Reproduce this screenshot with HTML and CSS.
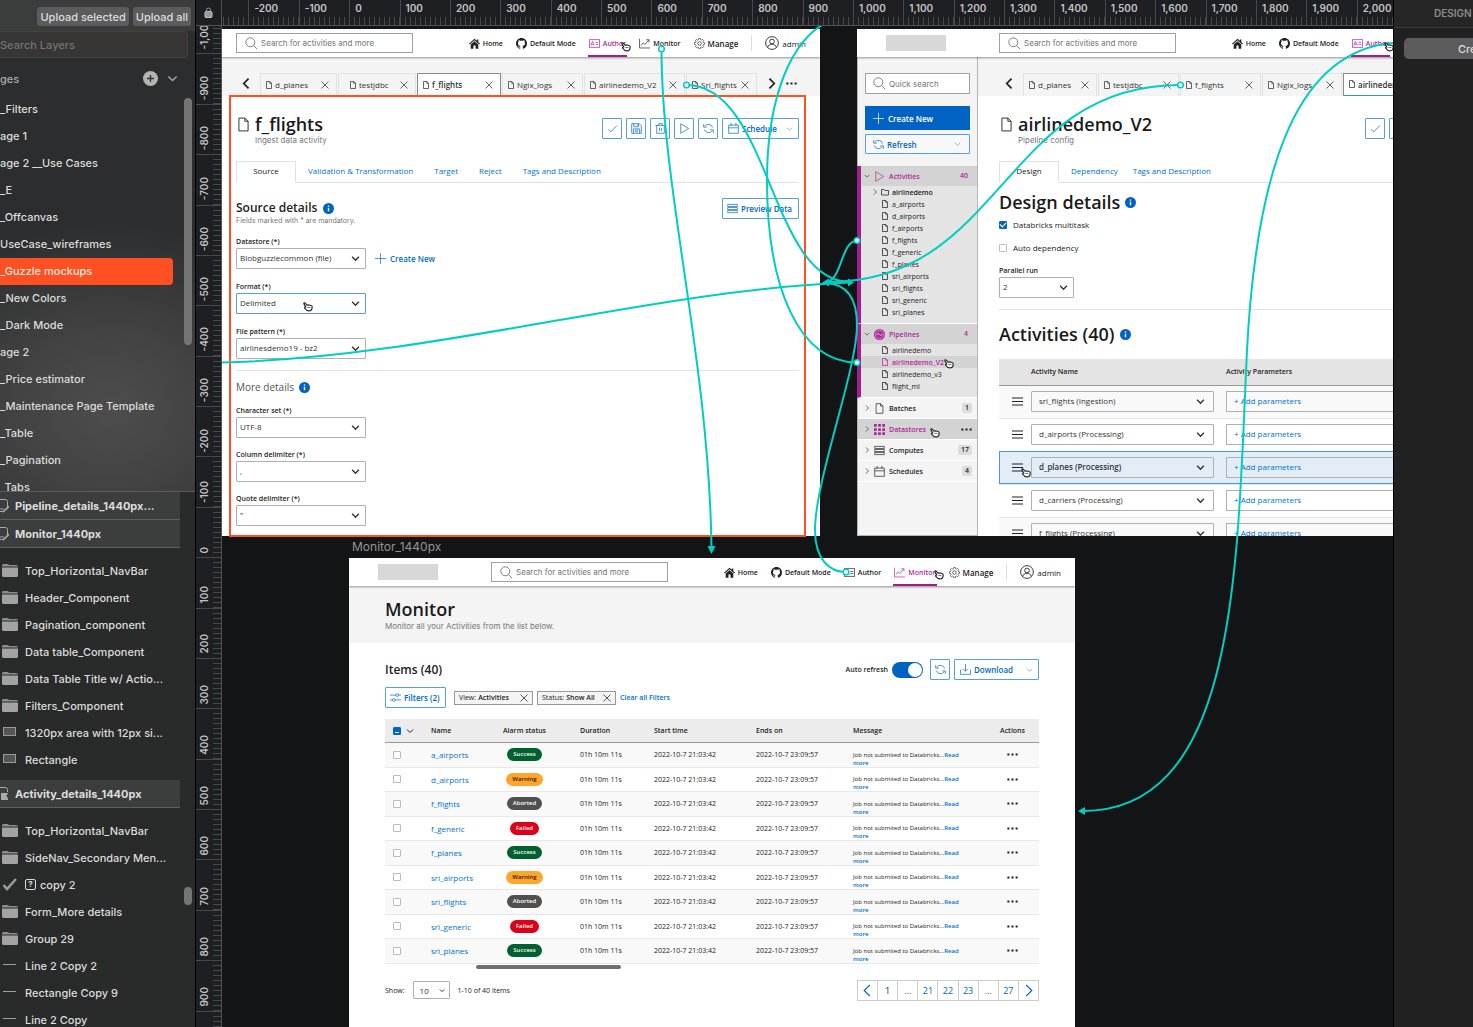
FILE: index.html
```html
<!DOCTYPE html>
<html lang="en">
<head>
  <meta charset="UTF-8">
  <title>Guzzle mockups</title>
  <link rel="stylesheet" href="styles.css">
</head>
<body>
  <svg class="sprite" aria-hidden="true">
    <symbol id="i-search" viewBox="0 0 16 16"><circle cx="6.5" cy="6.5" r="5.5"/><path d="M10.5 10.5 15 15"/></symbol>
    <symbol id="i-home" viewBox="0 0 16 16"><path fill="currentColor" stroke="none" d="M8 1 0 8.2l1.2 1.3L8 3.4l6.800 6.100L16 8.200l-2.500-2.300V2h-2v2.100zM8 4.700 2.500 9.600V15.500h4V11h3v4.500h4V9.600z"/></symbol>
    <symbol id="i-github" viewBox="0 0 16 16"><path fill="currentColor" stroke="none" d="M8 0C3.58 0 0 3.580 0 8c0 3.540 2.290 6.530 5.470 7.590.4.070.55-.17.55-.38 0-.19-.01-.82-.01-1.490-2.010.37-2.530-.49-2.690-.94-.09-.23-.48-.94-.82-1.130-.28-.15-.68-.52-.01-.53.63-.01 1.080.58 1.230.82.72 1.210 1.870.87 2.330.66.070-.52.28-.87.51-1.070-1.780-.2-3.640-.89-3.640-3.950 0-.87.31-1.590.82-2.150-.08-.2-.36-1.020.08-2.120 0 0 .67-.21 2.200.82.64-.18 1.320-.27 2-.27s1.360.09 2 .27c1.530-1.040 2.200-.82 2.200-.82.44 1.100.16 1.920.08 2.120.51.56.82 1.270.82 2.150 0 3.070-1.870 3.750-3.650 3.950.29.25.54.73.54 1.480 0 1.070-.01 1.930-.01 2.200 0 .21.15.46.55.38A8 8 0 0 0 16 8c0-4.420-3.580-8-8-8z"/></symbol>
    <symbol id="i-author" viewBox="0 0 16 16"><rect x=".5" y="2.500" width="15" height="11"/><path d="M2.500 11 5 5l2.500 6M3.500 9h3M9.500 6.500h4M9.500 9.500h4"/></symbol>
    <symbol id="i-monitor" viewBox="0 0 16 16"><path d="M.7 1v13.500H16M3 11l3-4 2.500 2.500L14 3M10.500 2.500H14.500V6.500"/></symbol>
    <symbol id="i-gear" viewBox="0 0 16 16"><circle cx="8" cy="8" r="2.600"/><path d="M6.800 1h2.400l.4 1.900 1.500.6 1.700-1 1.700 1.700-1 1.700.6 1.500 1.900.4v2.400l-1.900.4-.6 1.500 1 1.700-1.700 1.700-1.700-1-1.500.6-.4 1.900H6.800l-.4-1.900-1.500-.6-1.700 1-1.700-1.700 1-1.700-.6-1.500L0 10.200V7.800l1.900-.4.6-1.500-1-1.700 1.700-1.700 1.700 1 1.500-.6z" transform="translate(.6 -.3) scale(.93)"/></symbol>
    <symbol id="i-user" viewBox="0 0 16 16"><circle cx="8" cy="8" r="7.300"/><circle cx="8" cy="6.300" r="2.700"/><path d="M3 13c.8-2.300 2.500-3.600 5-3.600s4.200 1.300 5 3.600"/></symbol>
    <symbol id="i-file" viewBox="0 0 12 16"><path d="M1 1h6.500L11 4.500V15H1zM7.500 1v3.500H11"/></symbol>
    <symbol id="i-folder" viewBox="0 0 16 16"><path d="M1 3h5l1.500 2H15v9H1z"/></symbol>
    <symbol id="i-close" viewBox="0 0 16 16"><path d="M1 1l14 14M15 1 1 15"/></symbol>
    <symbol id="i-down" viewBox="0 0 16 16"><path d="M2 5l6 6 6-6"/></symbol>
    <symbol id="i-right" viewBox="0 0 16 16"><path d="M5 1l7 7-7 7"/></symbol>
    <symbol id="i-left" viewBox="0 0 16 16"><path d="M11 1 4 8l7 7"/></symbol>
    <symbol id="i-dots" viewBox="0 0 16 16"><path fill="currentColor" stroke="none" d="M.5 6.500h3v3h-3zM6.500 6.500h3v3h-3zM12.500 6.500h3v3h-3z"/></symbol>
    <symbol id="i-check" viewBox="0 0 16 16"><path d="M1.500 9l4 4L14.500 3.500"/></symbol>
    <symbol id="i-save" viewBox="0 0 16 16"><path d="M1 1h11l3 3v11H1zM4 1v4.500h7V1M3.500 15V8.500h9V15M5.500 10.500h5M5.500 12.800h5M9 2v2"/></symbol>
    <symbol id="i-trash" viewBox="0 0 16 16"><path d="M.5 3.500h15M2.500 3.500V15h11V3.500M5.500 3V1h5v2M6.500 7v4.500M9.500 7v4.500"/></symbol>
    <symbol id="i-play" viewBox="0 0 16 16"><path d="M2.500 1v14L14 8z"/></symbol>
    <symbol id="i-refresh" viewBox="0 0 16 16"><path d="M14 6.500A6.300 6.300 0 0 0 2.500 5M2 9.500A6.300 6.300 0 0 0 13.500 11M1 1.500V6h4.500M15 14.500V10h-4.500"/></symbol>
    <symbol id="i-calendar" viewBox="0 0 16 16"><path d="M1 3h14v12H1zM1 7h14M4.500 0v4M11.500 0v4"/></symbol>
    <symbol id="i-server" viewBox="0 0 16 16"><path d="M1 2h14v3H1zM1 6.500h14v3H1zM1 11h14v3H1z"/></symbol>
    <symbol id="i-plus" viewBox="0 0 16 16"><path d="M8 0v16M0 8h16"/></symbol>
    <symbol id="i-pipe" viewBox="0 0 16 16"><circle cx="8" cy="8" r="8" fill="currentColor" stroke="none"/><circle cx="8" cy="8" r="6" stroke="#d9a8d0" stroke-width="1"/><path stroke="#fff" d="M4 8.500c1.500-3 2.500-2 4-.5s2.500 2 4-.5"/></symbol>
    <symbol id="i-grid" viewBox="0 0 16 16"><path fill="currentColor" stroke="none" d="M0 0h4v4H0zM6 0h4v4H6zM12 0h4v4h-4zM0 6h4v4H0zM6 6h4v4H6zM12 6h4v4h-4zM0 12h4v4H0zM6 12h4v4H6zM12 12h4v4h-4z"/></symbol>
    <symbol id="i-bars" viewBox="0 0 16 16"><path d="M0 3h16M0 8h16M0 13h16"/></symbol>
    <symbol id="i-filter" viewBox="0 0 16 16"><path d="M0 4.500h8.500M12.500 4.500H16M0 11.500h3.500M7.500 11.500H16"/><circle cx="10.500" cy="4.500" r="2"/><circle cx="5.500" cy="11.500" r="2"/></symbol>
    <symbol id="i-download" viewBox="0 0 16 16"><path d="M8 0v10.500M4.500 7 8 10.500 11.500 7M.7 8v7h14.600V8"/></symbol>
    <symbol id="i-info" viewBox="0 0 16 16"><circle cx="8" cy="8" r="8" fill="#0063c3" stroke="none"/><path stroke="#fff" stroke-width="2" d="M8 7v5M8 3.500v2"/></symbol>
    <symbol id="i-group" viewBox="0 0 16 14"><path fill="#8d8d8d" stroke="none" d="M1 0h5l1 1h8.500v1.500H0V1z"/><path fill="#a3a3a3" stroke="none" d="M0 3.500h16V12l-1 1H1l-1-1z"/></symbol>
    <symbol id="i-shape" viewBox="0 0 16 14"><rect x="1.500" y="1.500" width="12" height="8" fill="#555" stroke="#999"/></symbol>
    <symbol id="i-tick" viewBox="0 0 16 14"><path stroke="#9a9a9a" stroke-width="2.500" d="M1.500 7l3.500 4L14 1"/></symbol>
    <symbol id="i-line" viewBox="0 0 16 14"><path stroke="#a0a0a0" d="M1 5.500h13"/></symbol>
    <symbol id="i-board" viewBox="0 0 10 16"><path stroke="#aaa" d="M-1 1.500h6.500q2 0 2 2V9l-4 4.500H-1M0 11h4"/><path fill="#aaa" stroke="none" d="M9 7.500v2L3 15v-2z"/></symbol>
    <symbol id="i-page" viewBox="0 0 10 16"><path stroke="#aaa" d="M-1 1.500h6.500q2 0 2 2V6"/><path fill="#aaa" stroke="none" d="M1 7h7l-1.500 3 1.500 2.500V14H1z"/></symbol>
    <symbol id="i-hand" viewBox="0 0 16 16"><path fill="#fff" stroke="#222" stroke-width="1.800" stroke-linejoin="round" d="M4.500 9 1.500 3.800C.9 2.300 2.600 1.300 3.600 2.500L6.500 6c1-.9 2.200-.8 3 0 1-.6 2-.4 2.700.4 1.600-.2 2.500.9 2.500 2.300 0 4-2 6.300-5.400 6.300-2.600 0-4-1-5-2.700L2.500 10.500C2 9.300 3.400 8.300 4.500 9z"/><path stroke="#222" stroke-width="1" d="M7 9.500h5"/></symbol>
  </svg>

  <aside class="layers">
    <div class="upload-bar">
      <button class="mac-btn">Upload selected</button>
      <button class="mac-btn">Upload all</button>
    </div>
    <input class="layer-search" type="text" placeholder="Search Layers" aria-label="Search Layers">
    <div class="pages-head">
      <span>ges</span>
      <button class="round-btn" aria-label="Add page"><svg class="icon"><use href="#i-plus"/></svg></button>
      <svg class="icon icon-lg"><use href="#i-down"/></svg>
    </div>
    <ul class="pages">
      <li>_Filters</li>
      <li>age 1</li>
      <li>age 2 __Use Cases</li>
      <li>_E</li>
      <li>_Offcanvas</li>
      <li>UseCase_wireframes</li>
      <li class="selected">_Guzzle mockups</li>
      <li>_New Colors</li>
      <li>_Dark Mode</li>
      <li>age 2</li>
      <li>_Price estimator</li>
      <li>_Maintenance Page Template</li>
      <li>_Table</li>
      <li>_Pagination</li>
      <li>_Tabs</li>
    </ul>
    <ul class="layer-list">
      <li class="board"><svg class="icon-board"><use href="#i-board"/></svg>Pipeline_details_1440px...</li>
      <li class="board board-last"><svg class="icon-board"><use href="#i-board"/></svg>Monitor_1440px</li>
      <li><svg class="icon-layer"><use href="#i-group"/></svg>Top_Horizontal_NavBar</li>
      <li><svg class="icon-layer"><use href="#i-group"/></svg>Header_Component</li>
      <li><svg class="icon-layer"><use href="#i-group"/></svg>Pagination_component</li>
      <li><svg class="icon-layer"><use href="#i-group"/></svg>Data table_Component</li>
      <li><svg class="icon-layer"><use href="#i-group"/></svg>Data Table Title w/ Actio...</li>
      <li><svg class="icon-layer"><use href="#i-group"/></svg>Filters_Component</li>
      <li><svg class="icon-layer"><use href="#i-shape"/></svg>1320px area with 12px si...</li>
      <li class="group-end"><svg class="icon-layer"><use href="#i-shape"/></svg>Rectangle</li>
      <li class="board board-last"><svg class="icon-board"><use href="#i-page"/></svg>Activity_details_1440px</li>
      <li><svg class="icon-layer"><use href="#i-group"/></svg>Top_Horizontal_NavBar</li>
      <li><svg class="icon-layer"><use href="#i-group"/></svg>SideNav_Secondary Men...</li>
      <li><svg class="icon-layer"><use href="#i-tick"/></svg><span class="glyph-box">?</span>copy 2</li>
      <li><svg class="icon-layer"><use href="#i-group"/></svg>Form_More details</li>
      <li><svg class="icon-layer"><use href="#i-group"/></svg>Group 29</li>
      <li><svg class="icon-layer"><use href="#i-line"/></svg>Line 2 Copy 2</li>
      <li><svg class="icon-layer"><use href="#i-line"/></svg>Rectangle Copy 9</li>
      <li><svg class="icon-layer"><use href="#i-line"/></svg>Line 2 Copy</li>
    </ul>
    <div class="thumb thumb-pages"></div>
    <div class="thumb thumb-layers"></div>
  </aside>

  <main class="workspace">
    <div class="corner">
      <svg width="9" height="11" viewBox="0 0 9 11"><rect x="1" y="4.500" width="7" height="6" rx="1" fill="#9a9a9a"/><path d="M2.500 5V3a2 2 0 0 1 4 0v2" fill="none" stroke="#9a9a9a"/></svg>
    </div>
    <div class="ruler-top">
      <ol>
        <li></li><li>-200</li><li>-100</li><li>0</li><li>100</li><li>200</li><li>300</li><li>400</li>
        <li>500</li><li>600</li><li>700</li><li>800</li><li>900</li><li>1,000</li><li>1,100</li><li>1,200</li>
        <li>1,300</li><li>1,400</li><li>1,500</li><li>1,600</li><li>1,700</li><li>1,800</li><li>1,900</li><li>2,000</li>
      </ol>
    </div>
    <div class="ruler-left">
      <ol>
        <li><span>-1,000</span></li><li><span>-900</span></li><li><span>-800</span></li><li><span>-700</span></li><li><span>-600</span></li>
        <li><span>-500</span></li><li><span>-400</span></li><li><span>-300</span></li><li><span>-200</span></li><li><span>-100</span></li>
        <li><span>0</span></li><li><span>100</span></li><li><span>200</span></li><li><span>300</span></li><li><span>400</span></li>
        <li><span>500</span></li><li><span>600</span></li><li><span>700</span></li><li><span>800</span></li><li><span>900</span></li><li></li>
      </ol>
    </div>

    <div class="canvas">
      <!-- Activity details -->
      <section class="artboard board-activity">
        <header class="navbar">
          <div class="logo"></div>
          <label class="search"><svg class="icon"><use href="#i-search"/></svg><input type="text" placeholder="Search for activities and more" aria-label="Search"></label>
          <nav class="menu">
            <a href="#"><svg class="icon"><use href="#i-home"/></svg>Home</a>
            <a href="#"><svg class="icon"><use href="#i-github"/></svg>Default Mode</a>
            <a href="#" class="active"><svg class="icon"><use href="#i-author"/></svg>Author</a>
            <a href="#"><svg class="icon"><use href="#i-monitor"/></svg>Monitor</a>
            <a href="#" class="manage"><svg class="icon"><use href="#i-gear"/></svg>Manage</a>
            <a href="#" class="account"><svg class="icon icon-user"><use href="#i-user"/></svg>admin</a>
          </nav>
        </header>
        <div class="split">
          <div class="sidenav"></div>
          <div class="page">
            <div class="tabbar">
              <button class="arrow" aria-label="Previous"><svg class="icon"><use href="#i-left"/></svg></button>
              <div class="tabs tabs-activity">
                <a href="#" class="tab"><svg class="icon-file"><use href="#i-file"/></svg>d_planes<svg class="icon-x"><use href="#i-close"/></svg></a>
                <a href="#" class="tab tab-inset"><svg class="icon-file"><use href="#i-file"/></svg>testjdbc<svg class="icon-x"><use href="#i-close"/></svg></a>
                <a href="#" class="tab current"><svg class="icon-file"><use href="#i-file"/></svg>f_flights<svg class="icon-x"><use href="#i-close"/></svg></a>
                <a href="#" class="tab"><svg class="icon-file"><use href="#i-file"/></svg>Ngix_logs<svg class="icon-x"><use href="#i-close"/></svg></a>
                <a href="#" class="tab"><svg class="icon-file"><use href="#i-file"/></svg>airlinedemo_V2<svg class="icon-x"><use href="#i-close"/></svg></a>
                <a href="#" class="tab"><svg class="icon-file"><use href="#i-file"/></svg>Sri_flights<svg class="icon-x"><use href="#i-close"/></svg></a>
              </div>
              <button class="arrow" aria-label="Next"><svg class="icon"><use href="#i-right"/></svg></button>
              <button class="arrow" aria-label="More"><svg class="icon"><use href="#i-dots"/></svg></button>
            </div>
            <div class="content">
              <div class="title-row">
                <svg class="icon-doc"><use href="#i-file"/></svg>
                <div>
                  <h1>f_flights</h1>
                  <p class="sub">Ingest data activity</p>
                </div>
                <div class="tools">
                  <button class="btn square" aria-label="Validate"><svg class="icon"><use href="#i-check"/></svg></button>
                  <button class="btn square" aria-label="Save"><svg class="icon"><use href="#i-save"/></svg></button>
                  <button class="btn square" aria-label="Delete"><svg class="icon"><use href="#i-trash"/></svg></button>
                  <button class="btn square" aria-label="Run"><svg class="icon"><use href="#i-play"/></svg></button>
                  <button class="btn square" aria-label="Refresh"><svg class="icon"><use href="#i-refresh"/></svg></button>
                  <button class="btn wide"><svg class="icon"><use href="#i-calendar"/></svg>Schedule<svg class="icon-caret"><use href="#i-down"/></svg></button>
                </div>
              </div>
              <nav class="subtabs">
                <a href="#" class="current">Source</a>
                <a href="#">Validation &amp; Transformation</a>
                <a href="#">Target</a>
                <a href="#">Reject</a>
                <a href="#">Tags and Description</a>
              </nav>
              <div class="section-head">
                <div>
                  <h3>Source details <svg class="icon-info"><use href="#i-info"/></svg></h3>
                  <p class="note">Fields marked with * are mandatory.</p>
                </div>
                <button class="btn wide preview"><svg class="icon"><use href="#i-server"/></svg>Preview Data</button>
              </div>
              <form class="fields">
                <div class="field">
                  <label for="datastore">Datastore (*)</label>
                  <div class="field-line">
                    <span class="select"><select id="datastore"><option>Blobguzzlecommon (file)</option></select><svg class="icon-caret"><use href="#i-down"/></svg></span>
                    <a href="#" class="create"><svg class="icon"><use href="#i-plus"/></svg>Create New</a>
                  </div>
                </div>
                <div class="field">
                  <label for="format">Format (*)</label>
                  <span class="select focus"><select id="format"><option>Delimited</option></select><svg class="icon-caret"><use href="#i-down"/></svg></span>
                </div>
                <div class="field">
                  <label for="pattern">File pattern (*)</label>
                  <span class="select"><select id="pattern"><option>airlinesdemo19 - bz2</option></select><svg class="icon-caret"><use href="#i-down"/></svg></span>
                </div>
              </form>
              <hr>
              <h4>More details <svg class="icon-info"><use href="#i-info"/></svg></h4>
              <form class="fields fields-more">
                <div class="field">
                  <label for="charset">Character set (*)</label>
                  <span class="select"><select id="charset"><option>UTF-8</option></select><svg class="icon-caret"><use href="#i-down"/></svg></span>
                </div>
                <div class="field">
                  <label for="column">Column delimiter (*)</label>
                  <span class="select"><select id="column"><option>,</option></select><svg class="icon-caret"><use href="#i-down"/></svg></span>
                </div>
                <div class="field">
                  <label for="quote">Quote delimiter (*)</label>
                  <span class="select"><select id="quote"><option>"</option></select><svg class="icon-caret"><use href="#i-down"/></svg></span>
                </div>
              </form>
            </div>
          </div>
        </div>
      </section>
      <div class="hotspot"></div>

      <!-- Pipeline details -->
      <section class="artboard board-pipeline">
        <header class="navbar">
          <div class="logo"></div>
          <label class="search"><svg class="icon"><use href="#i-search"/></svg><input type="text" placeholder="Search for activities and more" aria-label="Search"></label>
          <nav class="menu">
            <a href="#"><svg class="icon"><use href="#i-home"/></svg>Home</a>
            <a href="#"><svg class="icon"><use href="#i-github"/></svg>Default Mode</a>
            <a href="#" class="active"><svg class="icon"><use href="#i-author"/></svg>Author</a>
            <a href="#"><svg class="icon"><use href="#i-monitor"/></svg>Monitor</a>
            <a href="#" class="manage"><svg class="icon"><use href="#i-gear"/></svg>Manage</a>
            <a href="#" class="account"><svg class="icon icon-user"><use href="#i-user"/></svg>admin</a>
          </nav>
        </header>
        <div class="split">
          <div class="sidenav">
            <div class="side-tools">
              <label class="search quick"><svg class="icon"><use href="#i-search"/></svg><input type="text" placeholder="Quick search" aria-label="Quick search"></label>
              <button class="btn-primary"><svg class="icon"><use href="#i-plus"/></svg>Create New</button>
              <button class="btn side-refresh"><svg class="icon"><use href="#i-refresh"/></svg>Refresh<svg class="icon-caret"><use href="#i-down"/></svg></button>
            </div>
            <div class="tree open">
              <div class="tree-head"><svg class="icon-chev"><use href="#i-down"/></svg><svg class="icon"><use href="#i-play"/></svg>Activities<b>40</b></div>
              <ul>
                <li class="folder"><svg class="icon-chev"><use href="#i-right"/></svg><svg class="icon-folder"><use href="#i-folder"/></svg>airlinedemo</li>
                <li><svg class="icon-file"><use href="#i-file"/></svg>a_airports</li>
                <li><svg class="icon-file"><use href="#i-file"/></svg>d_airports</li>
                <li><svg class="icon-file"><use href="#i-file"/></svg>f_airports</li>
                <li><svg class="icon-file"><use href="#i-file"/></svg>f_flights</li>
                <li><svg class="icon-file"><use href="#i-file"/></svg>f_generic</li>
                <li><svg class="icon-file"><use href="#i-file"/></svg>f_planes</li>
                <li><svg class="icon-file"><use href="#i-file"/></svg>sri_airports</li>
                <li><svg class="icon-file"><use href="#i-file"/></svg>sri_flights</li>
                <li><svg class="icon-file"><use href="#i-file"/></svg>sri_generic</li>
                <li><svg class="icon-file"><use href="#i-file"/></svg>sri_planes</li>
              </ul>
            </div>
            <div class="tree open">
              <div class="tree-head"><svg class="icon-chev"><use href="#i-down"/></svg><svg class="icon"><use href="#i-pipe"/></svg>Pipelines<b>4</b></div>
              <ul>
                <li><svg class="icon-file"><use href="#i-file"/></svg>airlinedemo</li>
                <li class="current"><svg class="icon-file"><use href="#i-file"/></svg>airlinedemo_V2</li>
                <li><svg class="icon-file"><use href="#i-file"/></svg>airlinedemo_v3</li>
                <li><svg class="icon-file"><use href="#i-file"/></svg>flight_ml</li>
              </ul>
            </div>
            <div class="tree"><div class="tree-head"><svg class="icon-chev"><use href="#i-right"/></svg><svg class="icon"><use href="#i-file"/></svg>Batches<b>1</b></div></div>
            <div class="tree hover"><div class="tree-head"><svg class="icon-chev"><use href="#i-right"/></svg><svg class="icon"><use href="#i-grid"/></svg>Datastores<svg class="icon tree-more"><use href="#i-dots"/></svg></div></div>
            <div class="tree"><div class="tree-head"><svg class="icon-chev"><use href="#i-right"/></svg><svg class="icon"><use href="#i-server"/></svg>Computes<b>17</b></div></div>
            <div class="tree"><div class="tree-head"><svg class="icon-chev"><use href="#i-right"/></svg><svg class="icon"><use href="#i-calendar"/></svg>Schedules<b>4</b></div></div>
          </div>
          <div class="page">
            <div class="tabbar">
              <button class="arrow" aria-label="Previous"><svg class="icon"><use href="#i-left"/></svg></button>
              <div class="tabs tabs-pipeline">
                <a href="#" class="tab"><svg class="icon-file"><use href="#i-file"/></svg>d_planes<svg class="icon-x"><use href="#i-close"/></svg></a>
                <a href="#" class="tab"><svg class="icon-file"><use href="#i-file"/></svg>testjdbc<svg class="icon-x"><use href="#i-close"/></svg></a>
                <a href="#" class="tab"><svg class="icon-file"><use href="#i-file"/></svg>f_flights<svg class="icon-x"><use href="#i-close"/></svg></a>
                <a href="#" class="tab"><svg class="icon-file"><use href="#i-file"/></svg>Ngix_logs<svg class="icon-x"><use href="#i-close"/></svg></a>
                <a href="#" class="tab current"><svg class="icon-file"><use href="#i-file"/></svg>airlinedemo_V2<svg class="icon-x"><use href="#i-close"/></svg></a>
              </div>
            </div>
            <div class="content">
              <div class="title-row">
                <svg class="icon-doc"><use href="#i-file"/></svg>
                <div>
                  <h1>airlinedemo_V2</h1>
                  <p class="sub">Pipeline config</p>
                </div>
                <div class="tools">
                  <button class="btn square" aria-label="Validate"><svg class="icon"><use href="#i-check"/></svg></button>
                  <button class="btn square" aria-label="Save"><svg class="icon"><use href="#i-save"/></svg></button>
                  <button class="btn square" aria-label="Delete"><svg class="icon"><use href="#i-trash"/></svg></button>
                  <button class="btn square" aria-label="Run"><svg class="icon"><use href="#i-play"/></svg></button>
                  <button class="btn square" aria-label="Refresh"><svg class="icon"><use href="#i-refresh"/></svg></button>
                  <button class="btn wide"><svg class="icon"><use href="#i-calendar"/></svg>Schedule<svg class="icon-caret"><use href="#i-down"/></svg></button>
                </div>
              </div>
              <nav class="subtabs">
                <a href="#" class="current">Design</a>
                <a href="#">Dependency</a>
                <a href="#">Tags and Description</a>
              </nav>
              <h2 class="design-title">Design details <svg class="icon-info"><use href="#i-info"/></svg></h2>
              <form class="design-form">
                <label class="check-line"><input type="checkbox" class="check" checked>Databricks multitask</label>
                <label class="check-line"><input type="checkbox" class="check">Auto dependency</label>
                <div class="field">
                  <label for="parallel">Parallel run</label>
                  <span class="select small"><select id="parallel"><option>2</option></select><svg class="icon-caret"><use href="#i-down"/></svg></span>
                </div>
              </form>
              <hr>
              <h2 class="activities-title">Activities (40) <svg class="icon-info"><use href="#i-info"/></svg></h2>
              <table class="steps">
                <thead><tr><th class="c-drag"></th><th class="c-act">Activity Name</th><th>Activity Parameters</th></tr></thead>
                <tbody>
                  <tr><td><svg class="icon"><use href="#i-bars"/></svg></td><td><span class="select"><select aria-label="Activity 1"><option>sri_flights (Ingestion)</option></select><svg class="icon-caret"><use href="#i-down"/></svg></span></td><td><button class="param">+ Add parameters</button></td></tr>
                  <tr><td><svg class="icon"><use href="#i-bars"/></svg></td><td><span class="select"><select aria-label="Activity 2"><option>d_airports (Processing)</option></select><svg class="icon-caret"><use href="#i-down"/></svg></span></td><td><button class="param">+ Add parameters</button></td></tr>
                  <tr class="hover"><td><svg class="icon"><use href="#i-bars"/></svg></td><td><span class="select"><select aria-label="Activity 3"><option>d_planes (Processing)</option></select><svg class="icon-caret"><use href="#i-down"/></svg></span></td><td><button class="param">+ Add parameters</button></td></tr>
                  <tr><td><svg class="icon"><use href="#i-bars"/></svg></td><td><span class="select"><select aria-label="Activity 4"><option>d_carriers (Processing)</option></select><svg class="icon-caret"><use href="#i-down"/></svg></span></td><td><button class="param">+ Add parameters</button></td></tr>
                  <tr><td><svg class="icon"><use href="#i-bars"/></svg></td><td><span class="select"><select aria-label="Activity 5"><option>f_flights (Processing)</option></select><svg class="icon-caret"><use href="#i-down"/></svg></span></td><td><button class="param">+ Add parameters</button></td></tr>
                </tbody>
              </table>
            </div>
          </div>
        </div>
      </section>

      <!-- Monitor -->
      <div class="board-name">Monitor_1440px</div>
      <section class="artboard board-monitor">
        <header class="navbar">
          <div class="logo"></div>
          <label class="search"><svg class="icon"><use href="#i-search"/></svg><input type="text" placeholder="Search for activities and more" aria-label="Search"></label>
          <nav class="menu">
            <a href="#"><svg class="icon"><use href="#i-home"/></svg>Home</a>
            <a href="#"><svg class="icon"><use href="#i-github"/></svg>Default Mode</a>
            <a href="#"><svg class="icon"><use href="#i-author"/></svg>Author</a>
            <a href="#" class="active"><svg class="icon"><use href="#i-monitor"/></svg>Monitor</a>
            <a href="#" class="manage"><svg class="icon"><use href="#i-gear"/></svg>Manage</a>
            <a href="#" class="account"><svg class="icon icon-user"><use href="#i-user"/></svg>admin</a>
          </nav>
        </header>
        <div class="page-head">
          <h1>Monitor</h1>
          <p class="sub">Monitor all your Activities from the list below.</p>
        </div>
        <div class="monitor">
          <div class="items-row">
            <h3>Items (40)</h3>
            <label class="auto">Auto refresh <input type="checkbox" class="toggle" checked></label>
            <button class="btn square" aria-label="Refresh"><svg class="icon"><use href="#i-refresh"/></svg></button>
            <button class="btn download"><svg class="icon"><use href="#i-download"/></svg>Download<svg class="icon-caret"><use href="#i-down"/></svg></button>
          </div>
          <div class="filter-row">
            <button class="btn filters"><svg class="icon"><use href="#i-filter"/></svg>Filters (2)</button>
            <span class="chip">View: <b>Activities</b><svg class="icon-x"><use href="#i-close"/></svg></span>
            <span class="chip">Status: <b>Show All</b><svg class="icon-x"><use href="#i-close"/></svg></span>
            <a href="#" class="clear">Clear all Filters</a>
          </div>
          <table class="runs">
            <colgroup><col class="w-check"><col class="w-name"><col class="w-status"><col class="w-dur"><col class="w-start"><col class="w-end"><col class="w-msg"><col class="w-act"></colgroup>
            <thead>
              <tr><th><input type="checkbox" class="check partial" checked aria-label="Select all"><svg class="icon-caret"><use href="#i-down"/></svg></th><th>Name</th><th class="mid">Alarm status</th><th>Duration</th><th>Start time</th><th>Ends on</th><th>Message</th><th class="end">Actions</th></tr>
            </thead>
            <tbody>
              <tr><td><input type="checkbox" class="check" aria-label="a_airports"></td><td><a href="#">a_airports</a></td><td class="mid"><span class="pill success">Success</span></td><td>01h 10m 11s</td><td>2022-10-7 21:03:42</td><td>2022-10-7 23:09:57</td><td class="msg"><p>Job not submited to Databricks...<a href="#">Read more</a></p></td><td class="end"><svg class="icon"><use href="#i-dots"/></svg></td></tr>
              <tr><td><input type="checkbox" class="check" aria-label="d_airports"></td><td><a href="#">d_airports</a></td><td class="mid"><span class="pill warning">Warning</span></td><td>01h 10m 11s</td><td>2022-10-7 21:03:42</td><td>2022-10-7 23:09:57</td><td class="msg"><p>Job not submited to Databricks...<a href="#">Read more</a></p></td><td class="end"><svg class="icon"><use href="#i-dots"/></svg></td></tr>
              <tr><td><input type="checkbox" class="check" aria-label="f_flights"></td><td><a href="#">f_flights</a></td><td class="mid"><span class="pill aborted">Aborted</span></td><td>01h 10m 11s</td><td>2022-10-7 21:03:42</td><td>2022-10-7 23:09:57</td><td class="msg"><p>Job not submited to Databricks...<a href="#">Read more</a></p></td><td class="end"><svg class="icon"><use href="#i-dots"/></svg></td></tr>
              <tr><td><input type="checkbox" class="check" aria-label="f_generic"></td><td><a href="#">f_generic</a></td><td class="mid"><span class="pill failed">Failed</span></td><td>01h 10m 11s</td><td>2022-10-7 21:03:42</td><td>2022-10-7 23:09:57</td><td class="msg"><p>Job not submited to Databricks...<a href="#">Read more</a></p></td><td class="end"><svg class="icon"><use href="#i-dots"/></svg></td></tr>
              <tr><td><input type="checkbox" class="check" aria-label="f_planes"></td><td><a href="#">f_planes</a></td><td class="mid"><span class="pill success">Success</span></td><td>01h 10m 11s</td><td>2022-10-7 21:03:42</td><td>2022-10-7 23:09:57</td><td class="msg"><p>Job not submited to Databricks...<a href="#">Read more</a></p></td><td class="end"><svg class="icon"><use href="#i-dots"/></svg></td></tr>
              <tr><td><input type="checkbox" class="check" aria-label="sri_airports"></td><td><a href="#">sri_airports</a></td><td class="mid"><span class="pill warning">Warning</span></td><td>01h 10m 11s</td><td>2022-10-7 21:03:42</td><td>2022-10-7 23:09:57</td><td class="msg"><p>Job not submited to Databricks...<a href="#">Read more</a></p></td><td class="end"><svg class="icon"><use href="#i-dots"/></svg></td></tr>
              <tr><td><input type="checkbox" class="check" aria-label="sri_flights"></td><td><a href="#">sri_flights</a></td><td class="mid"><span class="pill aborted">Aborted</span></td><td>01h 10m 11s</td><td>2022-10-7 21:03:42</td><td>2022-10-7 23:09:57</td><td class="msg"><p>Job not submited to Databricks...<a href="#">Read more</a></p></td><td class="end"><svg class="icon"><use href="#i-dots"/></svg></td></tr>
              <tr><td><input type="checkbox" class="check" aria-label="sri_generic"></td><td><a href="#">sri_generic</a></td><td class="mid"><span class="pill failed">Failed</span></td><td>01h 10m 11s</td><td>2022-10-7 21:03:42</td><td>2022-10-7 23:09:57</td><td class="msg"><p>Job not submited to Databricks...<a href="#">Read more</a></p></td><td class="end"><svg class="icon"><use href="#i-dots"/></svg></td></tr>
              <tr><td><input type="checkbox" class="check" aria-label="sri_planes"></td><td><a href="#">sri_planes</a></td><td class="mid"><span class="pill success">Success</span></td><td>01h 10m 11s</td><td>2022-10-7 21:03:42</td><td>2022-10-7 23:09:57</td><td class="msg"><p>Job not submited to Databricks...<a href="#">Read more</a></p></td><td class="end"><svg class="icon"><use href="#i-dots"/></svg></td></tr>
            </tbody>
          </table>
          <div class="hscroll"></div>
          <div class="pager-row">
            <label for="show">Show:</label>
            <span class="select show"><select id="show"><option>10</option></select><svg class="icon-caret"><use href="#i-down"/></svg></span>
            <span class="count">1-10 of 40 items</span>
            <nav class="pager">
              <a href="#" aria-label="Previous"><svg class="icon"><use href="#i-left"/></svg></a><a href="#" class="current">1</a><span>...</span><a href="#">21</a><a href="#">22</a><a href="#">23</a><span>...</span><a href="#">27</a><a href="#" aria-label="Next"><svg class="icon"><use href="#i-right"/></svg></a>
            </nav>
          </div>
        </div>
      </section>

      <!-- prototype links and cursors, drawn over the artboards -->
      <svg class="links" width="1171" height="1001" viewBox="222 26 1171 1001">
        <g class="wires">
          <path d="M661.500 49C661.500 190 709 360 711.500 548"/>
          <path d="M686.500 85C770 85 770 282 850 282"/>
          <path d="M822 25C785 48 767 110 767 180C767 290 800 362 857 362.500"/>
          <path d="M222 362.500C430 358 650 290 850 282.500"/>
          <path d="M1180 85C1003 85 1003 282 828 282"/>
          <path d="M857 240.500C841 242 843 275 828 282"/>
          <path d="M826 283C848 284 857 300 857 325C857 370 815 480 815 530C815 560 830 572 846 572"/>
          <path d="M1394 43C1300 50 1257 160 1247 350C1237 560 1240 811 1083 811"/>
        </g>
        <g class="heads">
          <path d="M707.500 546h8l-4 8z"/>
          <path d="M848 278.500v8l6-4z"/>
          <path d="M829 278.500v8l-7-4z"/>
          <path d="M1085 807v8l-7-4z"/>
        </g>
        <g class="ends">
          <circle cx="661.500" cy="49" r="2.800"/>
          <circle cx="686.500" cy="85" r="2.800"/>
          <circle cx="857" cy="240.500" r="2.800"/>
          <circle cx="857" cy="362.500" r="2.800"/>
          <circle cx="1180.500" cy="85" r="2.800"/>
          <circle cx="846" cy="572" r="2.800"/>
        </g>
        <use href="#i-hand" x="621" y="41" width="10" height="11"/>
        <use href="#i-hand" x="303" y="301" width="10" height="11"/>
        <use href="#i-hand" x="1384" y="41" width="10" height="11"/>
        <use href="#i-hand" x="944" y="358" width="10" height="11"/>
        <use href="#i-hand" x="930" y="427" width="10" height="11"/>
        <use href="#i-hand" x="1021" y="467" width="10" height="11"/>
        <use href="#i-hand" x="934" y="569" width="10" height="11"/>
      </svg>
    </div>
  </main>

  <aside class="inspector">
    <div class="inspector-head">DESIGN</div>
    <button class="mac-btn create-btn">Cre</button>
  </aside>
</body>
</html>
```
FILE: styles.css
```css
* {
  box-sizing: border-box;
}
body {
  margin: 0;
  height: 100vh;
  display: flex;
  overflow: hidden;
  background: #131416;
  font-family: "Open Sans", "Noto Sans", sans-serif;
  font-size: 8px;
  color: #222;
}
ul, ol {
  list-style: none;
  margin: 0;
  padding: 0;
}
h1, h2, h3, h4, p {
  margin: 0;
}
a {
  color: #0072ce;
  text-decoration: none;
}
button, input, select {
  font: inherit;
  color: inherit;
  margin: 0;
}
svg {
  fill: none;
  stroke: currentColor;
  flex: none;
  display: block;
}
.sprite {
  position: absolute;
  width: 0;
  height: 0;
}
.icon {
  width: 11px;
  height: 11px;
}
.icon-file {
  width: 6px;
  height: 8px;
  stroke-width: 1.5;
}
.icon-x {
  width: 8px;
  height: 8px;
  margin-left: auto;
  stroke-width: 1.5;
}
.icon-caret {
  width: 8px;
  height: 8px;
}
.icon-info {
  width: 11px;
  height: 11px;
}

/* layers panel */
.layers {
  position: relative;
  flex: none;
  width: 196px;
  display: flex;
  flex-direction: column;
  overflow: hidden;
  border-right: 1px solid #000;
  background: radial-gradient(ellipse 230px 190px at 110px 410px, #4d4d4d, #434343 40%, #2c2d2e 100%);
  font-family: Inter, sans-serif;
  font-size: 11px;
  font-weight: 500;
  color: #dcdcdc;
}
.upload-bar {
  display: flex;
  justify-content: flex-end;
  gap: 4px;
  padding: 7px 4px 5px;
  background: #3b3c3c;
}
.mac-btn {
  height: 19px;
  padding: 0 3px;
  border: 0;
  border-radius: 3px;
  background: #5c5c5e;
  color: #dcdcdc;
  white-space: nowrap;
}
.layer-search {
  height: 27px;
  width: 188px;
  padding: 0;
  border: 1px solid #434241;
  border-left: 0;
  border-radius: 0 4px 4px 0;
  background: #373635;
}
.layer-search::placeholder {
  color: #757575;
}
.pages-head {
  display: flex;
  align-items: center;
  height: 38px;
  padding: 3px 17px 0 0;
  color: #a9a9a9;
}
.round-btn {
  display: grid;
  place-items: center;
  width: 15px;
  height: 15px;
  margin: 0 9px 0 auto;
  padding: 0;
  border: 0;
  border-radius: 50%;
  background: #b4b4b4;
  color: #333;
}
.round-btn .icon {
  width: 7px;
  height: 7px;
  stroke-width: 3;
}
.icon-lg {
  width: 11px;
  stroke-width: 2;
}
.pages {
  flex: none;
  height: 395px;
  overflow: hidden;
}
.pages li {
  height: 27px;
  line-height: 27px;
  margin-right: 22px;
}
.pages .selected {
  background: #ff5023;
  border-radius: 0 4px 4px 0;
  color: #ffe6df;
}
.layer-list {
  flex: 1;
  overflow: hidden;
  border-top: 1px solid #5a5a5a;
  background: #292a2a;
}
.layer-list li {
  display: flex;
  align-items: center;
  height: 27px;
  padding-left: 2px;
}
.layer-list .board {
  height: 28px;
  width: 180px;
  padding-left: 0;
  font-weight: 700;
  background: #3c3d3d;
  border-bottom: 1px solid #5f5f5f;
}
.layer-list .board-last {
  margin-bottom: 9px;
}
.layer-list .group-end {
  margin-bottom: 7px;
}
.icon-layer {
  width: 16px;
  height: 14px;
  margin-right: 7px;
}
.icon-board {
  width: 10px;
  height: 16px;
  margin-right: 5px;
}
.glyph-box {
  width: 11px;
  height: 11px;
  margin-right: 4px;
  border: 1px solid #dcdcdc;
  border-radius: 2px;
  font-size: 8px;
  font-weight: 700;
  line-height: 9px;
  text-align: center;
}
.thumb {
  position: absolute;
  right: 3px;
  width: 8px;
  border-radius: 4px;
  background: #747474;
}
.thumb-pages {
  top: 98px;
  height: 247px;
}
.thumb-layers {
  top: 887px;
  height: 18px;
}

/* rulers */
.workspace {
  flex: 1;
  min-width: 0;
  display: grid;
  grid-template-columns: 26px 1fr;
  grid-template-rows: 26px 1fr;
}
.corner,
.ruler-top,
.ruler-left {
  overflow: hidden;
  background: #1e1f22;
  font-family: Inter, sans-serif;
  font-size: 10px;
  font-weight: 600;
  color: #c4c4c4;
  border: 0 solid #505254;
}
.corner {
  display: grid;
  place-items: center;
  border-width: 0 1px 1px 0;
}
.ruler-top {
  border-bottom-width: 1px;
}
.ruler-top ol {
  display: flex;
  width: 1209px;
  height: 25px;
  margin-left: -24px;
}
.ruler-top li {
  flex: 1;
  padding-left: 5px;
  line-height: 16px;
  border-left: 1px solid #47494c;
  background: repeating-linear-gradient(to right, transparent 0 4px, #47494c 4px 5px) 0 100% / 100% 8px no-repeat;
}
.ruler-left {
  border-right-width: 1px;
}
.ruler-left ol {
  display: flex;
  flex-direction: column;
  width: 25px;
  height: 1058px;
  margin-top: -22px;
}
.ruler-left li {
  flex: 1;
  display: flex;
  align-items: flex-end;
  border-bottom: 1px solid #47494c;
  background: repeating-linear-gradient(to bottom, transparent 0 4px, #47494c 4px 5px) 100% 0 / 8px 100% no-repeat;
}
.ruler-left span {
  writing-mode: vertical-rl;
  transform: rotate(180deg);
  padding-top: 4px;
  line-height: 16px;
}

/* canvas */
.canvas {
  position: relative;
  overflow: hidden;
}
.artboard {
  position: absolute;
  width: 726px;
  display: flex;
  flex-direction: column;
  overflow: hidden;
  background: #fff;
}
.board-activity {
  left: -128px;
  top: 3px;
  height: 507px;
}
.board-pipeline {
  left: 635px;
  top: 3px;
  height: 507px;
}
.board-monitor {
  left: 127px;
  top: 532px;
  bottom: 0;
}
.board-name {
  position: absolute;
  left: 130px;
  top: 513px;
  font-family: Inter, sans-serif;
  font-size: 12px;
  line-height: 16px;
  color: #949494;
}
.hotspot {
  position: absolute;
  left: 7px;
  top: 69px;
  width: 577px;
  height: 442px;
  border: 2px solid #ff5023;
}
.links {
  position: absolute;
  left: 0;
  top: 0;
}
.wires {
  stroke: #00cec0;
  stroke-width: 2;
}
.heads {
  fill: #00cec0;
  stroke: none;
}
.ends {
  fill: #fff;
  stroke: #00cec0;
  stroke-width: 1.5;
}

/* product header */
.navbar {
  position: relative;
  flex: none;
  display: flex;
  align-items: center;
  height: 28px;
  padding: 0 13px 0 29px;
  background: #fff;
  box-shadow: 0 1px 2px rgba(0, 0, 0, 0.4);
}
.logo {
  width: 60px;
  height: 16px;
  margin-right: 53px;
  background: #d8d8d8;
}
.search {
  display: flex;
  align-items: center;
  gap: 3px;
  width: 177px;
  height: 20px;
  padding: 0 8px;
  border: 1px solid #a0a0a0;
  background: #fff;
  font-family: Inter, sans-serif;
  color: #666;
}
.search .icon {
  width: 13px;
  height: 13px;
}
.search input {
  flex: 1;
  min-width: 0;
  padding: 0;
  border: 0;
  outline: 0;
  background: none;
}
.search input::placeholder {
  color: #757575;
}
.menu {
  display: flex;
  gap: 11px;
  height: 28px;
  margin-left: auto;
  font-size: 7px;
  font-weight: 600;
}
.menu a {
  display: flex;
  align-items: center;
  gap: 3px;
  padding: 0 1px;
  border-bottom: 2px solid transparent;
  border-top: 2px solid transparent;
  color: #222;
}
.menu .active {
  color: #b0279b;
  border-bottom-color: #a01f8c;
}
.menu .manage,
.menu .account {
  font-size: 8px;
}
.menu .account {
  position: relative;
  margin-left: 14px;
  font-weight: 500;
}
.menu .account::before {
  content: "";
  position: absolute;
  left: -13px;
  top: 4px;
  width: 1px;
  height: 16px;
  background: #ddd;
}
.icon-user {
  width: 14px;
  height: 14px;
}

/* activity and pipeline pages */
.split {
  flex: 1;
  display: flex;
  min-height: 0;
}
.sidenav {
  flex: none;
  width: 121px;
  border: 1px solid #b5b5b5;
  border-top: 0;
  background: #f4f4f4;
}
.page {
  flex: 1;
  min-width: 0;
}
.tabbar {
  display: flex;
  align-items: center;
  gap: 9px;
  height: 39px;
  padding: 16px 20px 0 26px;
  background: #f4f4f4;
}
.arrow {
  padding: 0 0 3px;
  border: 0;
  background: none;
}
.arrow svg {
  stroke-width: 2.5;
}
.tabs {
  display: grid;
  gap: 1px;
  align-self: stretch;
}
.tabs-activity {
  grid-template-columns: 77px 78px 84px 81px 101px 71px;
  margin-left: -1px;
}
.tabs-pipeline {
  grid-template-columns: 74px 81px 81px 80px 101px;
  margin-left: -1px;
}
.tab {
  display: flex;
  align-items: center;
  gap: 3px;
  padding: 0 7px 1px 5px;
  border: 1px solid #e2e2e2;
  border-bottom: 0;
  font-weight: 500;
  color: #333;
}
.tab-inset {
  padding-left: 11px;
}
.tab.current {
  border-color: #8a8a8a;
  background: #fff;
  font-weight: 600;
}
.board-pipeline .tab.current {
  border-bottom: 1px solid #3a8fd6;
}
.content {
  padding: 16px 21px 0;
}
.title-row {
  display: flex;
}
.icon-doc {
  width: 11px;
  height: 15px;
  margin: 5px 6px 0 2px;
}
h1, h2 {
  font-size: 18px;
  line-height: 24px;
  font-weight: 600;
  color: #1a1a1a;
}
h2 {
  display: flex;
  align-items: center;
  gap: 5px;
}
h3, h4 {
  display: flex;
  align-items: center;
  gap: 6px;
  font-size: 12px;
  line-height: 16px;
  font-weight: 600;
}
h4 {
  gap: 5px;
  font-size: 10px;
  font-weight: 400;
  color: #555;
}
.sub {
  font-family: Inter, sans-serif;
  line-height: 8px;
  color: #777;
}
.tools {
  display: flex;
  gap: 4px;
  margin: 6px 0 0 auto;
}
.btn {
  display: flex;
  align-items: center;
  gap: 3px;
  height: 21px;
  padding: 0 5px;
  border: 1px solid #5a9fdc;
  border-radius: 1px;
  background: #fff;
  color: #0067c0;
  font-weight: 600;
}
.square {
  width: 20px;
  padding: 0;
  justify-content: center;
}
.wide {
  width: 77px;
}
.btn .icon-caret {
  width: 7px;
  margin-left: auto;
}
.preview {
  padding: 0 4px;
  margin: -2px 0 0 auto;
}
.subtabs {
  display: flex;
  margin-top: 17px;
  height: 22px;
  border-bottom: 1px solid #e2e2e2;
}
.subtabs a {
  margin-left: 12px;
  margin-right: 9px;
  line-height: 20px;
}
.board-pipeline .subtabs a {
  margin-right: 3px;
}
.subtabs a.current,
.board-pipeline .subtabs a.current {
  width: 60px;
  height: 22px;
  margin: 0;
  border: 1px solid #e2e2e2;
  border-bottom-color: #fff;
  line-height: 18px;
  text-align: center;
  color: #222;
  font-weight: 500;
}
.section-head {
  display: flex;
  margin-top: 17px;
}
.note {
  font-family: Inter, sans-serif;
  font-size: 7px;
  line-height: 10px;
  color: #777;
}
.fields {
  display: grid;
  gap: 13px;
  margin-top: 11px;
}
.fields-more {
  gap: 12px;
}
.field {
  display: grid;
  gap: 1px;
  font-size: 7px;
  font-weight: 600;
  line-height: 10px;
}
.field-line {
  display: flex;
  align-items: center;
  gap: 9px;
}
.create {
  display: flex;
  align-items: center;
  gap: 4px;
  font-size: 8px;
}
.select {
  display: grid;
  align-items: center;
  width: 130px;
  height: 21px;
  font-size: 8px;
  font-weight: 400;
  color: #333;
}
.select select {
  grid-area: 1 / 1;
  width: 100%;
  height: 100%;
  padding: 0 3px 2px;
  border: 1px solid #b0b0b0;
  border-radius: 1px;
  background: none;
  appearance: none;
}
.select .icon-caret {
  grid-area: 1 / 1;
  justify-self: end;
  width: 9px;
  height: 9px;
  margin-right: 6px;
  stroke-width: 2.5;
  pointer-events: none;
}
.focus select {
  border-color: #5a9fdc;
}
.small {
  width: 75px;
}
hr {
  height: 1px;
  margin: 11px 0 8px;
  border: 0;
  background: #e2e2e2;
}

/* side navigation */
.side-tools {
  display: grid;
  grid-template-columns: minmax(0, 1fr);
  padding: 16px 7px 12px;
}
.quick {
  width: auto;
  height: 21px;
  padding: 0 7px;
}
.btn-primary {
  display: flex;
  align-items: center;
  gap: 4px;
  height: 24px;
  margin: 12px 0 4px;
  padding: 0 8px;
  border: 0;
  background: #0063c3;
  color: #fff;
  font-weight: 600;
}
.side-refresh {
  height: 20px;
  padding: 0 7px;
  background: #f8f8f8;
}
.side-refresh .icon-caret {
  margin-right: 1px;
}
.tree {
  border-bottom: 1px solid #fff;
  font-size: 7px;
}
.tree.open {
  margin-left: -1px;
  border-left: 4px solid #a01f8c;
  background: #e4e4e4;
}
.tree-head {
  display: flex;
  align-items: center;
  gap: 4px;
  height: 20px;
  padding: 0 5px 0 6px;
  font-weight: 600;
}
.open .tree-head {
  padding: 0 9px 0 3px;
}
.open .tree-head,
.hover .tree-head {
  background: #d3d3d3;
  color: #b0279b;
}
.icon-chev {
  width: 6px;
  height: 6px;
  stroke: #444;
  stroke-width: 2;
}
.tree-head b {
  margin-left: auto;
  padding: 0 3px;
  border-radius: 2px;
  background: #dcdcdc;
  line-height: 10px;
  font-weight: 600;
}
.open .tree-head b {
  padding: 0;
  background: none;
}
.tree-more {
  margin-left: auto;
  color: #222;
}
.tree ul {
  padding-bottom: 5px;
}
.tree li {
  display: flex;
  align-items: center;
  gap: 4px;
  height: 12px;
  padding-left: 21px;
  font-weight: 500;
}
.tree .folder {
  gap: 3px;
  padding-left: 11px;
  font-weight: 600;
}
.icon-folder {
  width: 8px;
  height: 8px;
  stroke-width: 1.5;
}
.tree .current {
  background: #d3d3d3;
  color: #b0279b;
  font-weight: 600;
}

/* pipeline design */
.design-title {
  margin-top: 7px;
}
.design-form {
  display: grid;
  gap: 11px;
  margin-top: 5px;
}
.design-form .field {
  padding-top: 1px;
}
.check-line {
  display: flex;
  align-items: center;
  gap: 6px;
  line-height: 12px;
  font-weight: 500;
}
.check {
  appearance: none;
  display: block;
  width: 8px;
  height: 8px;
  border: 1px solid #bbb;
  border-radius: 1px;
  background: #fff;
}
.check:checked {
  border-color: #0067c0;
  background: #0067c0;
}
.check:checked::before {
  content: "";
  display: block;
  width: 5px;
  height: 3px;
  border: solid #fff;
  border-width: 0 0 1px 1px;
  transform: rotate(-45deg);
}
.partial:checked::before {
  width: 4px;
  height: 4px;
  margin-left: 1px;
  border-width: 0 0 1px;
  transform: none;
}
.activities-title {
  margin: 12px 0 13px;
}
table {
  width: 100%;
  table-layout: fixed;
  border-collapse: collapse;
}
th, td {
  padding: 0;
  text-align: left;
}
th {
  font-size: 7px;
  font-weight: 600;
}
.steps th {
  height: 26px;
  background: #e4e4e4;
  border-bottom: 1px solid #999;
}
.c-drag {
  width: 32px;
}
.c-act {
  width: 195px;
}
.steps td {
  height: 33px;
  border-bottom: 1px solid #e8e8e8;
}
.steps tr:nth-child(odd) td {
  background: #f9f9f9;
}
.steps td > .icon {
  margin-left: 13px;
  stroke-width: 1.5;
}
.steps .select {
  width: 183px;
}
.steps select {
  padding: 0 7px 2px;
}
.steps .select .icon-caret {
  margin-right: 9px;
}
.param {
  display: block;
  width: 100%;
  height: 21px;
  padding: 0 7px 2px;
  border: 1px solid #b0b0b0;
  background: none;
  color: #0072ce;
  text-align: left;
  font-size: 8px;
}
.steps tr.hover {
  outline: 1px solid #4a9ad8;
  outline-offset: -1px;
}
.steps tr.hover td {
  background: #e3edf8;
}
.steps tr.hover select {
  font-weight: 600;
}

/* monitor page */
.page-head {
  padding: 11px 36px 12px;
  background: #f4f4f4;
}
.page-head .sub {
  line-height: 10px;
}
.monitor {
  padding: 16px 36px 0;
}
.items-row,
.filter-row,
.pager-row {
  display: flex;
  align-items: center;
}
.items-row {
  gap: 4px;
}
.auto {
  display: flex;
  align-items: center;
  gap: 4px;
  margin: 0 3px 0 auto;
  font-size: 7px;
  font-weight: 600;
}
.toggle {
  appearance: none;
  width: 31px;
  height: 16px;
  padding: 1px;
  border-radius: 8px;
  background: #0063c3;
}
.toggle::before {
  content: "";
  display: block;
  width: 14px;
  height: 14px;
  margin-left: auto;
  border-radius: 50%;
  background: #fff;
}
.download {
  width: 85px;
}
.filter-row {
  gap: 4px;
  margin-top: 7px;
}
.filters {
  width: 61px;
  padding: 0 4px;
  margin-right: 4px;
}
.chip {
  display: flex;
  align-items: center;
  gap: 2px;
  width: 79px;
  height: 14px;
  padding: 0 4px;
  border: 1px solid #999;
  background: #f4f4f4;
  font-size: 7px;
}
.chip b,
.clear {
  font-weight: 600;
}
.clear {
  font-size: 7px;
}
.runs {
  margin-top: 11px;
  font-size: 7px;
}
.runs thead {
  background: #ececec;
}
.runs th {
  height: 23px;
  border-bottom: 1px solid #999;
}
.w-check { width: 46px; }
.w-name { width: 62px; }
.w-status { width: 87px; }
.w-dur { width: 74px; }
.w-start { width: 102px; }
.w-end { width: 97px; }
.w-msg { width: 133px; }
.w-act { width: 53px; }
.runs th .check,
.runs th .icon-caret {
  display: inline-block;
  vertical-align: middle;
  margin-left: 8px;
  stroke-width: 2;
}
.runs th .icon-caret {
  margin-left: 5px;
}
.runs td .check {
  margin-left: 8px;
}
.runs td {
  height: 24px;
  border-bottom: 1px solid #e8e8e8;
}
.runs tr:nth-child(odd) td {
  height: 25px;
  background: #f9f9f9;
}
.runs td > a {
  font-size: 8px;
}
.runs .mid {
  padding-right: 24px;
  text-align: center;
}
.runs .end {
  text-align: center;
}
.runs .end .icon {
  margin: 0 auto;
}
.runs .msg {
  vertical-align: bottom;
}
.runs p {
  width: 112px;
  font-size: 6px;
  line-height: 8px;
}
.runs p a {
  font-weight: 600;
}
.pill {
  display: inline-block;
  height: 13px;
  padding: 0 6px;
  border-radius: 7px;
  font-size: 6px;
  line-height: 13px;
  font-weight: 600;
  color: #fff;
}
.success { background: #00602f; }
.warning { background: #ffa52e; color: #332000; }
.aborted { background: #505050; }
.failed { background: #dc0019; }
.hscroll {
  width: 145px;
  height: 4px;
  margin: 1px 0 11px 91px;
  border-radius: 2px;
  background: #6f6f6f;
}
.pager-row {
  gap: 8px;
  font-size: 7px;
}
.show {
  width: 37px;
  height: 18px;
}
.show select {
  padding: 0 6px;
}
.show .icon-caret {
  width: 6px;
  margin-right: 5px;
}
.pager {
  display: flex;
  width: 182px;
  height: 21px;
  margin-left: auto;
  border: 1px solid #ccc;
  border-width: 1px 0 1px 1px;
  font-size: 9px;
  line-height: 19px;
}
.pager a,
.pager span {
  flex: 1;
  display: grid;
  place-items: center;
  border-right: 1px solid #ccc;
  color: #0067c0;
}
.pager .icon {
  width: 13px;
  height: 13px;
  stroke-width: 1.5;
}
.pager .current {
  color: #002f6c;
}

/* inspector */
.inspector {
  flex: none;
  width: 80px;
  overflow: hidden;
  border-left: 1px solid #000;
  background: #212122;
  font-family: Inter, sans-serif;
  font-size: 11px;
}
.inspector-head {
  height: 28px;
  padding-left: 40px;
  border-bottom: 1px solid #3a3a3a;
  background: #262627;
  font-size: 10px;
  font-weight: 600;
  line-height: 27px;
  color: #8b8b8b;
}
.create-btn {
  width: 120px;
  height: 21px;
  margin: 10px 0 0 10px;
  padding-left: 54px;
  border-radius: 5px;
  font-weight: 500;
  text-align: left;
}
```
